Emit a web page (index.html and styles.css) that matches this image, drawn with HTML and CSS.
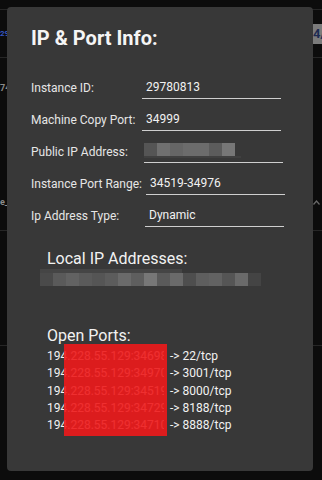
FILE: index.html
```
<!DOCTYPE html>
<html lang="en">
<head>
    <meta charset="UTF-8">
    <meta name="viewport" content="width=device-width, initial-scale=1.0">
    <title>IP &amp; Port Info</title>
    <link rel="stylesheet" href="styles.css">
</head>
<body>
    <div class="backdrop">
        <div class="bg-row bg-row-top"></div>
        <div class="bg-row bg-row-a">
            <span class="bg-link">29</span>
            <span class="bg-badge">4/</span>
        </div>
        <div class="bg-row bg-row-b">
            <div class="bg-cells">
                <span class="bg-text">74</span>
                <span class="bg-text">e_</span>
            </div>
            <svg class="bg-chevron" width="7" height="5" viewBox="0 0 7 5">
                <polyline points="0.5 4.5, 3.5 1, 6.5 4.5" stroke="#6a6a6a" stroke-width="1.2" fill="none"/>
            </svg>
        </div>
        <div class="bg-row bg-row-c"></div>
        <div class="bg-row bg-row-d"></div>
    </div>

    <div class="modal">
        <h2 class="modal-title">IP &amp; Port Info:</h2>

        <div class="fields">
            <div class="field">
                <label class="field-label">Instance ID:</label>
                <input class="field-input" type="text" value="29780813" readonly>
            </div>
            <div class="field">
                <label class="field-label">Machine Copy Port:</label>
                <input class="field-input" type="text" value="34999" readonly>
            </div>
            <div class="field">
                <label class="field-label">Public IP Address:</label>
                <div class="field-input blurred">
                    <div class="pixels">
                        <span style="background:#555555"></span>
                        <span style="background:#707070"></span>
                        <span style="background:#666666"></span>
                        <span style="background:#6c6c6c"></span>
                        <span style="background:#6c6c6c"></span>
                        <span style="background:#5c5c5c"></span>
                        <span style="background:#777777"></span>
                    </div>
                    <div class="pixels-strip"></div>
                </div>
            </div>
            <div class="field">
                <label class="field-label">Instance Port Range:</label>
                <input class="field-input shift-4" type="text" value="34519-34976" readonly>
            </div>
            <div class="field">
                <label class="field-label">Ip Address Type:</label>
                <input class="field-input shift-3" type="text" value="Dynamic" readonly>
            </div>
        </div>

        <div class="section local-section">
            <h3 class="section-title">Local IP Addresses:</h3>
            <div class="local-blur">
                <div class="pixels-top"></div>
                <div class="pixels">
                    <span style="background:#4a4a4a"></span>
                    <span style="background:#5a5a5a"></span>
                    <span style="background:#626262"></span>
                    <span style="background:#5a5a5a"></span>
                    <span style="background:#555555"></span>
                    <span style="background:#5c5c5c"></span>
                    <span style="background:#6a6a6a"></span>
                    <span style="background:#5e5e5e"></span>
                    <span style="background:#777777"></span>
                    <span style="background:#5a5a5a"></span>
                    <span style="background:#6a6a6a"></span>
                    <span style="background:#4e4e4e"></span>
                    <span style="background:#5e5e5e"></span>
                    <span style="background:#626262"></span>
                    <span style="background:#555555"></span>
                    <span style="background:#6a6a6a"></span>
                    <span style="background:#444444"></span>
                </div>
            </div>
        </div>

        <div class="section ports-section">
            <h3 class="section-title">Open Ports:</h3>
            <div class="ports">
                <div class="port"><span class="port-ip">194.228.55.129:34698</span> -&gt; 22/tcp</div>
                <div class="port"><span class="port-ip">194.228.55.129:34970</span> -&gt; 3001/tcp</div>
                <div class="port"><span class="port-ip">194.228.55.129:34519</span> -&gt; 8000/tcp</div>
                <div class="port"><span class="port-ip">194.228.55.129:34729</span> -&gt; 8188/tcp</div>
                <div class="port"><span class="port-ip">194.228.55.129:34710</span> -&gt; 8888/tcp</div>
                <div class="redact"></div>
            </div>
        </div>
    </div>
</body>
</html>
```

FILE: styles.css
```
body {
    margin: 0;
    background-color: #0c0c0c;
    font-family: Roboto, "Liberation Sans", sans-serif;
    overflow: hidden;
    height: 480px;
}

/* page behind the dialog */
.backdrop {
    display: flex;
    flex-direction: column;
}
.bg-row {
    border-bottom: 1px solid #262626;
    box-sizing: border-box;
    display: flex;
    justify-content: space-between;
}
.bg-row-top {
    height: 10px;
}
.bg-row-a {
    height: 48px;
    align-items: center;
}
.bg-row-b {
    height: 173px;
}
.bg-row-c {
    height: 115px;
}
.bg-row-d {
    height: 134px;
    border-bottom: none;
}
.bg-link {
    width: 7px;
    overflow: hidden;
    white-space: nowrap;
    font-size: 8px;
    font-weight: bold;
    color: #3656c0;
}
.bg-badge {
    width: 9px;
    height: 20px;
    line-height: 20px;
    overflow: hidden;
    background-color: #7b7b7b;
    color: #1d2b52;
    font-size: 13px;
    font-weight: bold;
    white-space: nowrap;
}
.bg-cells {
    display: flex;
    flex-direction: column;
    gap: 98px;
    padding-top: 22px;
}
.bg-text {
    width: 7px;
    overflow: hidden;
    white-space: nowrap;
    font-size: 9px;
    font-weight: bold;
    line-height: 16px;
    color: #8a8a8a;
}
.bg-chevron {
    margin-top: 142px;
    margin-right: 2px;
}

/* dialog */
.modal {
    position: fixed;
    top: 7px;
    left: 7px;
    width: 306px;
    height: 464px;
    box-sizing: border-box;
    padding: 19px 24px;
    background-color: #383838;
    border-radius: 4px;
    color: #f2f2f2;
}
.modal-title {
    margin: 0;
    font-size: 20px;
    line-height: 24px;
    font-weight: bold;
    color: #f5f5f5;
}
.fields {
    margin-top: 25px;
    display: flex;
    flex-direction: column;
    gap: 8px;
}
.field {
    display: flex;
    align-items: center;
    height: 24px;
}
.field-label {
    width: 111px;
    flex: none;
    padding-top: 2px;
    font-size: 12px;
    white-space: nowrap;
    color: #e6e6e6;
}
.field-input {
    width: 139px;
    height: 24px;
    box-sizing: border-box;
    margin: 0;
    padding: 0 4px;
    border: 0;
    border-bottom: 1px solid #cfcfcf;
    background: transparent;
    color: #f2f2f2;
    font-family: Roboto, "Liberation Sans", sans-serif;
    font-size: 12px;
    outline: none;
}
.shift-3 {
    margin-left: 3px;
}
.shift-4 {
    margin-left: 4px;
}
.blurred {
    padding: 4px 0 0 0;
    margin-left: 2px;
}
.pixels {
    display: flex;
}
.pixels span {
    width: 13px;
    height: 13px;
}
.pixels-strip {
    width: 97px;
    height: 2px;
    background-color: #404040;
}

.section {
    padding-left: 16px;
}
.section-title {
    margin: 0;
    font-size: 16px;
    line-height: 20px;
    font-weight: normal;
    color: #f2f2f2;
}
.local-section {
    margin-top: 22px;
}
.local-blur {
    margin-left: -7px;
}
.pixels-top {
    width: 142px;
    height: 4px;
    background-color: #454545;
}
.ports-section {
    margin-top: 40px;
}
.ports {
    position: relative;
    margin-top: 2px;
}
.port {
    font-size: 12px;
    line-height: 17.3px;
    white-space: nowrap;
    color: #f2f2f2;
}
.port-ip {
    display: inline-block;
    vertical-align: top;
    width: 117px;
    margin-right: 3px;
    overflow: hidden;
}
.redact {
    position: absolute;
    top: -4px;
    left: 17px;
    width: 103px;
    height: 92px;
    background-color: rgba(238, 25, 27, 0.9);
}
```
